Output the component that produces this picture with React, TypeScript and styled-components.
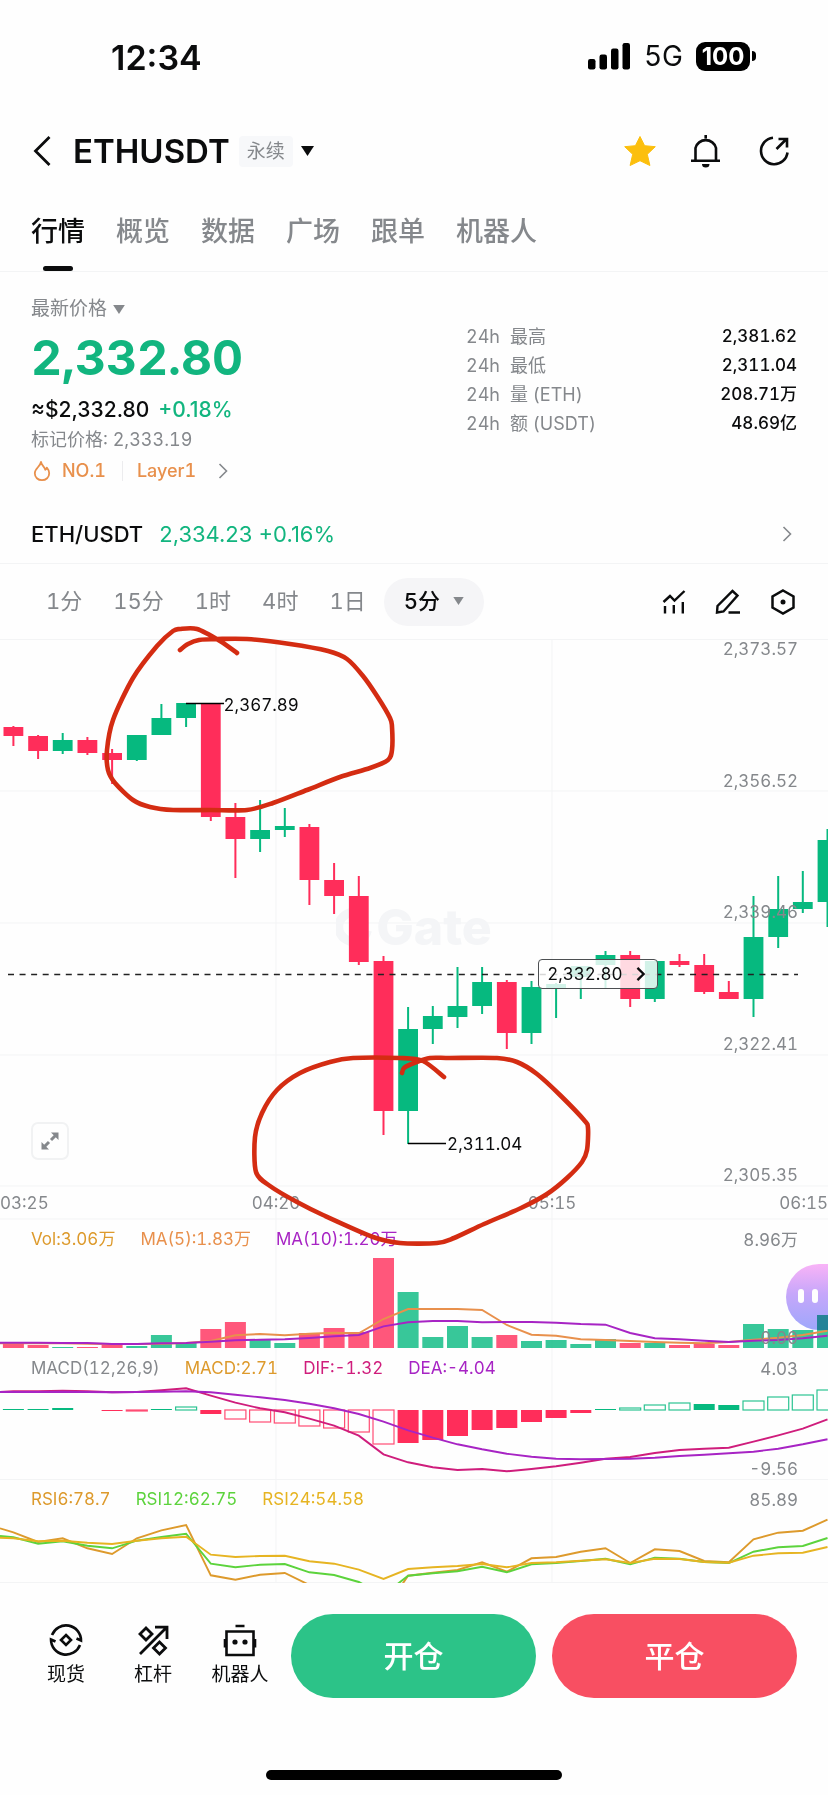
import React from "react";
import styled, { createGlobalStyle } from "styled-components";

const color = {
  ink: "#0b0c0d",
  muted: "#85888c",
  line: "#f3f4f5",
  up: "#06b97f",
  upText: "#12b57f",
  down: "#ff2d5a",
  gold: "#dd9a2c",
  orange: "#e8904c",
  purple: "#a724c4",
  magenta: "#cf1d7c",
  lime: "#5cd33c",
  yellow: "#e6b422",
  marker: "#d42c12",
};

const GlobalStyle = createGlobalStyle`
  *, *::before, *::after { box-sizing: border-box; }
  body {
    margin: 0;
    background: #fefefe;
    color: ${color.ink};
    font-family: Inter, "Noto Sans CJK SC", sans-serif;
    font-size: 18px;
    font-variant-numeric: tabular-nums;
    overflow-x: hidden;
  }
  button {
    font: inherit;
    font-variant-numeric: inherit;
    color: inherit;
    background: none;
    border: 0;
    padding: 0;
    cursor: pointer;
  }
  a { color: inherit; text-decoration: none; }
  svg { display: block; flex: none; }
`;

/* ---------- status bar ---------- */

const StatusBar = styled.div`
  display: flex;
  align-items: center;
  justify-content: space-between;
  height: 114px;
  padding: 0 72px 0 111px;
`;

const Clock = styled.time`
  font-size: 34px;
  font-weight: 600;
  font-variant-numeric: normal;
`;

const StatusIcons = styled.div`
  display: flex;
  align-items: center;
  gap: 13px;
  padding-bottom: 2px;
`;

const Network = styled.span`
  font-size: 28px;
  line-height: 30px;
`;

const Battery = styled.div`
  display: flex;
  align-items: center;
  gap: 2px;
`;

const BatteryBody = styled.span`
  width: 54px;
  height: 29px;
  border-radius: 9px;
  background: #000;
  color: #fff;
  font-size: 24px;
  font-weight: 700;
  font-variant-numeric: normal;
  line-height: 29px;
  text-align: center;
`;

const BatteryTip = styled.span`
  width: 4px;
  height: 10px;
  border-radius: 0 4px 4px 0;
  background: #000;
`;

/* ---------- header ---------- */

const Header = styled.header`
  display: flex;
  align-items: center;
  height: 74px;
  padding: 0 38px 0 30px;
`;

const IconButton = styled.button`
  display: grid;
  place-items: center;
`;

const Title = styled.h1`
  margin: 0 9px 0 19px;
  font-size: 33px;
  font-weight: 600;
`;

const PairButton = styled.button`
  display: flex;
  align-items: center;
  gap: 8px;
`;

const Badge = styled.span`
  padding: 0 8px;
  border-radius: 4px;
  background: #f7f8fa;
  color: ${color.muted};
  font-size: 19px;
  line-height: 31px;
`;

const HeaderActions = styled.div`
  display: flex;
  gap: 35px;
  margin-left: auto;
`;

/* ---------- tabs ---------- */

const Tabs = styled.nav`
  display: flex;
  gap: 31px;
  height: 84px;
  padding: 24px 31px 0;
  border-bottom: 1px solid ${color.line};
`;

const Tab = styled.a<{ $active?: boolean }>`
  display: flex;
  flex-direction: column;
  align-items: center;
  justify-content: space-between;
  font-size: 27px;
  font-weight: 500;
  line-height: 40px;
  color: ${(p) => (p.$active ? color.ink : color.muted)};
  &::after {
    content: "";
    width: 30px;
    height: 5px;
    border-radius: 3px;
    background: ${(p) => (p.$active ? color.ink : "transparent")};
  }
`;

/* ---------- price summary ---------- */

const Summary = styled.section`
  display: flex;
  justify-content: space-between;
  padding: 24px 31px 0;
`;

const PriceColumn = styled.div`
  display: flex;
  flex-direction: column;
  align-items: flex-start;
`;

const PriceKind = styled.button`
  display: flex;
  align-items: center;
  gap: 6px;
  color: ${color.muted};
  font-size: 19px;
  line-height: 26px;
`;

const LastPrice = styled.strong`
  margin-top: 6px;
  color: ${color.upText};
  font-size: 48px;
  font-weight: 700;
  line-height: 60px;
`;

const FiatPrice = styled.div`
  display: flex;
  gap: 9px;
  margin-top: 8px;
  font-size: 21px;
  font-weight: 500;
  font-variant-numeric: normal;
  line-height: 28px;
`;

const Change = styled.span`
  color: ${color.upText};
`;

const MarkPrice = styled.div`
  margin-top: 3px;
  color: ${color.muted};
  font-size: 18px;
  line-height: 26px;
`;

const Tags = styled.a`
  display: flex;
  align-items: center;
  margin-top: 5px;
  color: ${color.orange};
  font-size: 18px;
  font-weight: 500;
  line-height: 26px;
`;

const RankTag = styled.span`
  margin-left: 9px;
  padding-right: 16px;
  border-right: 1px solid #ececee;
  line-height: 20px;
`;

const SectorTag = styled.span`
  margin: 0 22px 0 14px;
`;

const Stats = styled.dl`
  flex: 0 1 331px;
  margin: 26px 0 0;
`;

const StatRow = styled.div`
  display: flex;
  line-height: 29px;
`;

const StatPeriod = styled.span`
  display: inline-block;
  width: 44px;
`;

const StatName = styled.dt`
  color: ${color.muted};
`;

const StatValue = styled.dd`
  margin: 0 0 0 auto;
  font-size: 17px;
  font-weight: 500;
`;

const SpotLink = styled.a`
  display: flex;
  align-items: center;
  gap: 16px;
  margin-top: 20px;
  height: 60px;
  padding: 0 36px 0 31px;
  border-bottom: 1px solid ${color.line};
  font-size: 22px;
  font-weight: 500;
  font-variant-numeric: normal;
`;

const SpotQuote = styled.span`
  margin-right: auto;
  color: ${color.upText};
  font-weight: 400;
`;

/* ---------- period toolbar ---------- */

const Toolbar = styled.div`
  display: flex;
  align-items: center;
  justify-content: space-between;
  height: 75px;
  padding: 0 32px 0 46px;
`;

const Periods = styled.div`
  display: flex;
  align-items: center;
  gap: 31px;
  color: ${color.muted};
  font-size: 22px;
  line-height: 44px;
  & > button { padding-bottom: 2px; }
`;

const PeriodMenu = styled.button`
  display: flex;
  align-items: center;
  gap: 13px;
  height: 48px;
  margin-left: -13px;
  padding: 0 20px;
  border-radius: 24px;
  background: #f5f5f7;
  color: ${color.ink};
  font-weight: 500;
`;

const Tools = styled.div`
  display: flex;
  gap: 29px;
`;

/* ---------- charts ---------- */

const ChartSection = styled.section`
  position: relative;
  font-size: 17px;
`;

const Panel = styled.div<{ $height: number }>`
  position: relative;
  height: ${(p) => p.$height}px;
`;

const Plot = styled.svg`
  position: absolute;
  inset: 0;
  width: 100%;
  height: 100%;
`;

const Sketch = styled(Plot)`
  overflow: visible;
  pointer-events: none;
`;

const Watermark = styled.div`
  position: absolute;
  top: 262px;
  left: 0;
  right: 0;
  display: flex;
  align-items: center;
  justify-content: center;
  gap: 4px;
  color: #f4f5f7;
  font-size: 50px;
  font-weight: 800;
  line-height: 52px;
`;

const Scale = styled.div`
  position: absolute;
  top: 0;
  right: 30px;
  bottom: 2px;
  display: flex;
  flex-direction: column;
  justify-content: space-between;
  align-items: flex-end;
  color: ${color.muted};
  line-height: 20px;
`;

const PanelScale = styled(Scale)`
  top: 11px;
  bottom: 0;
`;

const Callout = styled.span<{ $left: number; $top: number }>`
  position: absolute;
  left: ${(p) => p.$left}%;
  top: ${(p) => p.$top}px;
  line-height: 20px;
`;

const PriceTag = styled.button`
  position: absolute;
  top: 320px;
  left: 65%;
  display: flex;
  align-items: center;
  justify-content: space-between;
  width: 120px;
  height: 30px;
  padding: 0 12px 0 8px;
  border: 1px solid #4c4f52;
  border-radius: 4px;
  background: rgba(255, 255, 255, 0.82);
`;

const ExpandButton = styled.button`
  position: absolute;
  left: 31px;
  bottom: 27px;
  display: grid;
  place-items: center;
  width: 38px;
  height: 38px;
  border: 2px solid #f1f2f3;
  border-radius: 7px;
  background: #fefefe;
`;

const TimeAxis = styled.div`
  position: relative;
  display: grid;
  grid-template-columns: 1fr 2fr 2fr 1fr;
  height: 32px;
  color: ${color.muted};
  line-height: 32px;
  text-align: center;
  & > :first-child { text-align: left; }
  & > :last-child { text-align: right; }
`;

const Legend = styled.div`
  position: relative;
  display: flex;
  gap: 25px;
  padding: 8px 31px 0;
  line-height: 24px;
`;

const LegendItem = styled.span<{ $color: string }>`
  color: ${(p) => p.$color};
`;

const Assistant = styled.button`
  position: absolute;
  right: 0;
  top: 45px;
  display: flex;
  align-items: center;
  gap: 8px;
  width: 42px;
  height: 66px;
  padding: 0 0 2px 12px;
  border-radius: 33px 0 0 33px;
  background: linear-gradient(180deg, #fab4f8 0%, #c7a8fb 45%, #9fa8fc 100%);
  mix-blend-mode: multiply;
`;

const Eye = styled.span`
  width: 6px;
  height: 14px;
  border-radius: 3px;
  background: #fff;
`;

/* ---------- bottom bar ---------- */

const BottomBar = styled.footer`
  display: flex;
  align-items: center;
  gap: 16px;
  padding: 31px 31px 0;
`;

const Shortcuts = styled.div`
  flex: none;
  display: grid;
  grid-template-columns: 70px 104px 70px;
  justify-items: center;
`;

const Shortcut = styled.a`
  display: flex;
  flex-direction: column;
  align-items: center;
  gap: 4px;
  font-size: 19px;
  line-height: 28px;
  white-space: nowrap;
`;

const TradeButton = styled.button<{ $tone: string }>`
  flex: 1;
  height: 84px;
  padding-bottom: 4px;
  border-radius: 42px;
  background: ${(p) => p.$tone};
  color: #fff;
  font-size: 30px;
  font-weight: 500;
`;

const HomeIndicator = styled.div`
  width: 296px;
  height: 10px;
  margin: 72px auto 14px;
  border-radius: 5px;
  background: #000;
`;

/* ---------- chart data ---------- */

const WIDTH = 828;
const STEP = 24.67;
const FIRST = 13.4;
const xOf = (i: number) => Math.round((FIRST + i * STEP) * 10) / 10;

/* high, body top, body bottom, low, rising */
type Candle = [number, number, number, number, 0 | 1];
const candles: Candle[] = [
  [87, 88, 97, 107, 0], [96, 97, 112, 120, 0], [94, 101, 112, 115, 1], [98, 101, 114, 116, 0],
  [110, 114, 121, 145, 0], [96, 96, 121, 122, 1], [65, 79, 96, 96, 1], [64, 64, 79, 88, 1],
  [64, 65, 178, 182, 0], [164, 178, 200, 239, 0], [161, 191, 200, 213, 1], [169, 187, 191, 198, 1],
  [185, 188, 241, 266, 0], [224, 241, 257, 275, 0], [237, 257, 323, 326, 0], [317, 322, 472, 496, 0],
  [368, 390, 472, 505, 1], [367, 377, 390, 405, 1], [328, 367, 378, 389, 1], [328, 343, 367, 375, 1],
  [341, 343, 394, 410, 0], [342, 348, 394, 405, 1], [344, 345, 349, 379, 1], [327, 327, 338, 360, 1],
  [312, 316, 326, 350, 1], [312, 316, 360, 368, 0], [322, 322, 360, 363, 1], [315, 322, 326, 328, 0],
  [315, 326, 353, 355, 0], [342, 353, 360, 360, 0], [257, 298, 360, 378, 1], [237, 270, 298, 309, 1],
  [232, 263, 270, 274, 1], [190, 201, 263, 288, 1],
];

const volumes = [
  4, 3, 1, 1, 3, 2, 13, 5, 19, 26, 8, 5, 15, 20, 16, 90, 56, 11, 22, 11, 13, 7, 8, 4, 9, 5, 5, 3, 4, 3, 24, 19, 18, 33,
];

const ma5 = [
  385, 385, 385, 386, 387, 387, 386, 384, 378, 361, 357, 361, 356, 353, 355, 312, 282, 282, 282, 285, 330, 359, 362,
  373, 375, 378, 381, 383, 385, 381, 374, 368, 360, 347,
];
const ma10 = [
  383, 383, 384, 384, 387, 387, 385, 384, 380, 376, 374, 373, 369, 364, 360, 334, 322, 318, 318, 322, 321, 321, 323,
  327, 329, 354, 370, 373, 377, 381, 377, 375, 370, 362,
];

/* offset from the zero line, solid or outlined */
type Bar = [number, 0 | 1];
const macd: Bar[] = [
  [1, 1], [1, 1], [2, 1], [0, 1], [-1, 1], [-1, 0], [1, 1], [3, 0], [-4, 1], [-9, 0], [-12, 0], [-13, 0], [-16, 0],
  [-18, 0], [-22, 0], [-34, 0], [-33, 1], [-30, 1], [-26, 1], [-20, 1], [-18, 1], [-12, 1], [-8, 1], [-3, 1], [1, 1],
  [2, 0], [5, 0], [7, 0], [6, 1], [5, 1], [9, 0], [13, 0], [15, 0], [20, 0],
];
const dif = [
  529, 529, 527, 529, 532, 531, 526, 520, 542, 563, 580, 592, 611, 632, 662, 718, 742, 757, 765, 762, 769, 762, 754,
  743, 731, 726, 714, 705, 701, 698, 680, 661, 641, 613,
];
const dea = [
  531, 531, 530, 531, 532, 531, 530, 529, 532, 539, 547, 555, 566, 580, 597, 620, 646, 668, 688, 703, 716, 725, 731,
  733, 732, 731, 728, 723, 719, 715, 710, 701, 688, 673,
];

const rsi6 = [
  952, 981, 970, 1000, 1017, 970, 946, 930, 1081, 1094, 1079, 1074, 1110, 1140, 1160, 1190, 1082, 1073, 1065, 1042,
  1070, 1030, 1026, 1010, 1000, 1044, 1003, 1008, 1038, 1042, 973, 953, 947, 914,
];
const rsi12 = [
  967, 986, 979, 992, 1000, 977, 966, 956, 1046, 1057, 1049, 1047, 1072, 1080, 1101, 1140, 1082, 1075, 1069, 1055,
  1072, 1048, 1044, 1038, 1031, 1048, 1028, 1031, 1041, 1044, 1010, 997, 993, 969,
];
const rsi24 = [
  970, 979, 977, 983, 987, 977, 970, 965, 1019, 1026, 1023, 1022, 1039, 1046, 1064, 1092, 1062, 1057, 1053, 1047,
  1057, 1044, 1042, 1037, 1033, 1044, 1031, 1032, 1041, 1043, 1022, 1015, 1013, 996,
];

const linear = (origin: number) => (v: number) => Math.round(((v - origin) / 3) * 10) / 10;
const volumeY = linear(12);
const macdY = linear(399);
const rsiY = linear(792);

function linePoints(values: number[], y: (v: number) => number, lead = values[0]) {
  return [`0,${y(lead)}`, ...values.map((v, i) => `${xOf(i)},${y(v)}`)].join(" ");
}

/* hand-drawn loops around the high and the low */
type Point = [number, number];
const highLoop: Point[] = [
  [180, 11], [188, 5], [199, 1], [217, 0], [247, 0], [290, 5], [328, 12], [347, 20], [363, 37], [377, 57], [390, 79],
  [392, 88], [392, 111], [388, 121], [370, 129], [340, 138], [307, 151], [273, 164], [247, 171], [210, 171],
  [173, 171], [150, 168], [133, 161], [115, 144], [108, 131], [107, 111], [113, 81], [133, 39], [157, 7], [173, -8],
  [180, -10], [197, -10], [220, 2], [237, 14],
];
const lowLoop: Point[] = [
  [402, 434], [404, 429], [414, 424], [430, 419], [450, 419], [497, 419], [517, 423], [537, 435], [561, 457],
  [584, 481], [588, 489], [587, 511], [582, 523], [567, 539], [547, 555], [521, 569], [484, 585], [454, 599],
  [437, 604], [400, 604], [373, 598], [323, 576], [297, 563], [270, 547], [256, 533], [255, 498], [262, 474],
  [277, 451], [300, 434], [330, 423], [353, 419], [400, 419], [423, 422], [444, 438],
];

function smoothPath(points: Point[]) {
  let d = `M${points[0][0]} ${points[0][1]}`;
  for (let i = 0; i < points.length - 1; i++) {
    const p0 = points[Math.max(0, i - 1)];
    const p1 = points[i];
    const p2 = points[i + 1];
    const p3 = points[Math.min(points.length - 1, i + 2)];
    const c1 = [p1[0] + (p2[0] - p0[0]) / 7, p1[1] + (p2[1] - p0[1]) / 7];
    const c2 = [p2[0] - (p3[0] - p1[0]) / 7, p2[1] - (p3[1] - p1[1]) / 7];
    d += ` C${c1[0].toFixed(1)} ${c1[1].toFixed(1)} ${c2[0].toFixed(1)} ${c2[1].toFixed(1)} ${p2[0]} ${p2[1]}`;
  }
  return d;
}

/* ---------- icons ---------- */

const Caret = ({ size, fill }: { size: number; fill: string }) => (
  <svg width={size} height={size - 3} viewBox="0 0 13 10" fill={fill} aria-hidden="true">
    <path d="M0 0h13L6.500 10z" />
  </svg>
);

const Chevron = ({ height = 16, stroke = color.muted, weight = 1.6 }) => (
  <svg width={height / 2 + 2} height={height} viewBox="0 0 10 16" fill="none" stroke={stroke} strokeWidth={weight} aria-hidden="true">
    <path d="M1.500 1l7 7-7 7" />
  </svg>
);

const BackIcon = () => (
  <svg width="24" height="32" viewBox="0 0 24 32" fill="none" stroke={color.ink} strokeWidth="2.800" aria-hidden="true">
    <path d="M19.500 2L5.500 16l14 14" />
  </svg>
);

const SignalIcon = () => (
  <svg width="43" height="27" viewBox="0 0 43 27" fill="#000" aria-hidden="true">
    <rect x="0" y="16" width="7.500" height="10.500" rx="2.200" />
    <rect x="11.500" y="11.500" width="7.500" height="15" rx="2.200" />
    <rect x="23" y="5.500" width="7.500" height="21" rx="2.200" />
    <rect x="34.500" y="0" width="7.500" height="26.500" rx="2.200" />
  </svg>
);

const StarIcon = () => (
  <svg width="32" height="32" viewBox="0 0 32 32" fill="#fcbf0d" stroke="#fcbf0d" strokeLinejoin="round" aria-hidden="true">
    <path d="M16 1.500l4.600 9.200 10.700 1-8 7.600 2.600 11.200L16 25.700 6.100 30.500 8.700 19.300.7 11.700l10.700-1z" />
  </svg>
);

const BellIcon = () => (
  <svg width="32" height="34" viewBox="0 0 32 34" fill="none" stroke={color.ink} strokeWidth="2.600" aria-hidden="true">
    <path d="M0 26.800h29M4.500 26.800V14a10.500 10 0 0 1 20.500 0v12.800M14.700 1v3.500" />
    <path d="M11 30h7.500a3.700 3.500 0 0 1-7.500 0z" fill={color.ink} stroke="none" />
  </svg>
);

const ShareIcon = () => (
  <svg width="32" height="32" viewBox="0 0 32 32" fill="none" stroke={color.ink} strokeWidth="2.600" aria-hidden="true">
    <path d="M15 2.700A13.300 13.300 0 1 0 29.500 17.500M18.500 14L28.500 4M20.500 4h8.500v8.500" />
  </svg>
);

const FlameIcon = () => (
  <svg width="22" height="22" viewBox="0 0 22 22" fill="none" stroke={color.orange} strokeWidth="1.800" strokeLinejoin="round" aria-hidden="true">
    <path d="M10 2c.6 3.500 3.500 4.500 4.300 7.800.9-.4 1.400-1.300 1.500-2.200 1.500 1.700 2.400 3.600 2.400 5.600 0 4.200-3.100 7-7.200 7s-7.200-2.800-7.200-7C3.800 8.500 9.300 6.500 10 2z" />
  </svg>
);

const IndicatorIcon = () => (
  <svg width="24" height="26" viewBox="0 0 24 26" fill="none" stroke={color.ink} strokeWidth="2.400" aria-hidden="true">
    <path d="M1.500 13l6.500-6 4.500 4.500L22.500 2M3 17v7.500M11.800 16v8.500M20.800 13v11.500" />
  </svg>
);

const PencilIcon = () => (
  <svg width="26" height="26" viewBox="0 0 26 26" fill="none" stroke={color.ink} strokeWidth="2.400" aria-hidden="true">
    <path d="M17.500 2l5 4.500L8.500 22.500 2 23.500l.5-6.500zM13.500 23.500H25" />
  </svg>
);

const HexagonIcon = () => (
  <svg width="26" height="26" viewBox="0 0 26 26" fill="none" stroke={color.ink} strokeWidth="2.500" aria-hidden="true">
    <path d="M13 1.500l10.500 6v11L13 24.500l-10.500-6v-11z" />
    <circle cx="13" cy="13" r="2.500" fill={color.ink} stroke="none" />
  </svg>
);

const ExpandIcon = () => (
  <svg width="20" height="20" viewBox="0 0 20 20" fill={color.muted} stroke={color.muted} strokeWidth="3" aria-hidden="true">
    <path d="M11 9l5-5M9 11l-5 5" />
    <path d="M11 1.500h7.500V9zM1.500 11v7.500H9z" stroke="none" />
  </svg>
);

const SpotIcon = () => (
  <svg width="34" height="34" viewBox="0 0 34 34" fill="none" stroke={color.ink} strokeWidth="2.600" aria-hidden="true">
    <path d="M3 12A15 15 0 0 1 32 17.500l-4.500-2M31 22A15 15 0 0 1 2 16.500l4.500 2" />
    <path d="M17 12l5 5-5 5-5-5z" />
  </svg>
);

const LeverageIcon = () => (
  <svg width="34" height="34" viewBox="0 0 34 34" fill="none" stroke={color.ink} strokeWidth="2.800" aria-hidden="true">
    <path d="M4 31L30 5M19 4.200h12V16" />
    <path d="M10 5l6 6-6 6-6-6zM23.500 19l6 6-6 6-6-6z" />
  </svg>
);

const RobotIcon = () => (
  <svg width="34" height="34" viewBox="0 0 34 34" fill="none" stroke={color.ink} strokeWidth="2.600" aria-hidden="true">
    <path d="M12.500 3h9M3.500 8.500h27V32h-27zM2 16v8.500M32 16v8.500" />
    <circle cx="12" cy="19" r="2.600" fill={color.ink} stroke="none" />
    <circle cx="22" cy="19" r="2.600" fill={color.ink} stroke="none" />
  </svg>
);

/* ---------- chart panels ---------- */

const Grid = () => (
  <Plot viewBox={`0 0 ${WIDTH} 944`} preserveAspectRatio="none" stroke={color.line} strokeWidth="1" aria-hidden="true">
    <path d="M0 .5H828M0 152H828M0 284H828M0 416H828M0 547H828M0 580H828M0 840.500H828M0 943.500H828" />
    <path d="M276 0V944M552 0V944" />
  </Plot>
);

const PricePlot = () => (
  <Plot viewBox={`0 0 ${WIDTH} 548`} preserveAspectRatio="none" role="img" aria-label="ETHUSDT K线">
    {candles.map(([high, top, bottom, low, up], i) => (
      <g key={i} fill={up ? color.up : color.down}>
        <rect x={xOf(i) - 1} y={high} width="2" height={low - high} />
        <rect x={xOf(i) - 9.9} y={top} width="19.800" height={bottom - top} />
      </g>
    ))}
    <path d="M186 64.500H224M408 504.500H446" stroke="#000" strokeWidth="1.600" />
    <path d="M8 335.500H798" stroke="#222" strokeWidth="1.300" strokeDasharray="6 5.560" />
  </Plot>
);

const VolumePlot = () => (
  <Plot viewBox={`0 0 ${WIDTH} 129`} preserveAspectRatio="none" fill="none" strokeWidth="1.900" aria-hidden="true">
    {volumes.map((v, i) => (
      <rect
        key={i}
        x={xOf(i) - 10.5}
        y={129 - v}
        width="21"
        height={v}
        fill={candles[i][4] ? color.up : color.down}
        opacity="0.8"
      />
    ))}
    <polyline points={linePoints(ma5, volumeY)} stroke={color.orange} />
    <polyline points={linePoints(ma10, volumeY)} stroke={color.purple} />
  </Plot>
);

const MACD_ZERO = 62;

const MacdPlot = () => (
  <Plot viewBox={`0 0 ${WIDTH} 131`} preserveAspectRatio="none" fill="none" strokeWidth="1.900" aria-hidden="true">
    {macd.map(([v, solid], i) => {
      const tone = v > 0 ? color.up : color.down;
      const y = v > 0 ? MACD_ZERO - v : MACD_ZERO;
      return solid ? (
        <rect key={i} x={xOf(i) - 10.5} y={y} width="21" height={Math.abs(v)} fill={tone} />
      ) : (
        <rect key={i} x={xOf(i) - 10.5} y={y} width="21" height={Math.abs(v)} stroke={tone} strokeWidth="1.200" opacity="0.85" />
      );
    })}
    <polyline points={linePoints(dif, macdY, 531)} stroke={color.magenta} />
    <polyline points={linePoints(dea, macdY)} stroke={color.purple} />
  </Plot>
);

const RsiPlot = () => (
  <Plot viewBox={`0 0 ${WIDTH} 104`} preserveAspectRatio="none" fill="none" strokeWidth="1.900" aria-hidden="true">
    <polyline points={linePoints(rsi6, rsiY, 940)} stroke={color.gold} />
    <polyline points={linePoints(rsi12, rsiY, 963)} stroke={color.lime} />
    <polyline points={linePoints(rsi24, rsiY, 968)} stroke={color.yellow} />
  </Plot>
);

/* ---------- page ---------- */

const tabs = ["行情", "概览", "数据", "广场", "跟单", "机器人"];
const periods = ["1分", "15分", "1时", "4时", "1日"];
const priceTicks = ["2,373.57", "2,356.52", "2,339.46", "2,322.41", "2,305.35"];
const timeTicks = ["03:25", "04:20", "05:15", "06:15"];
const stats = [
  ["最高", "2,381.62"],
  ["最低", "2,311.04"],
  ["量 (ETH)", "208.71万"],
  ["额 (USDT)", "48.69亿"],
];

export default function App() {
  return (
    <>
      <GlobalStyle />
      <StatusBar>
        <Clock>12:34</Clock>
        <StatusIcons>
          <SignalIcon />
          <Network>5G</Network>
          <Battery>
            <BatteryBody>100</BatteryBody>
            <BatteryTip />
          </Battery>
        </StatusIcons>
      </StatusBar>

      <Header>
        <IconButton aria-label="返回"><BackIcon /></IconButton>
        <Title>ETHUSDT</Title>
        <PairButton>
          <Badge>永续</Badge>
          <Caret size={13} fill={color.ink} />
        </PairButton>
        <HeaderActions>
          <IconButton aria-label="收藏"><StarIcon /></IconButton>
          <IconButton aria-label="提醒"><BellIcon /></IconButton>
          <IconButton aria-label="分享"><ShareIcon /></IconButton>
        </HeaderActions>
      </Header>

      <Tabs>
        {tabs.map((name, i) => (
          <Tab key={name} href="#" $active={i === 0}>{name}</Tab>
        ))}
      </Tabs>

      <Summary>
        <PriceColumn>
          <PriceKind>
            最新价格 <Caret size={12} fill={color.muted} />
          </PriceKind>
          <LastPrice>2,332.80</LastPrice>
          <FiatPrice>
            <span>≈$2,332.80</span>
            <Change>+0.18%</Change>
          </FiatPrice>
          <MarkPrice>标记价格: 2,333.19</MarkPrice>
          <Tags href="#">
            <FlameIcon />
            <RankTag>NO.1</RankTag>
            <SectorTag>Layer1</SectorTag>
            <Chevron />
          </Tags>
        </PriceColumn>
        <Stats>
          {stats.map(([name, value]) => (
            <StatRow key={name}>
              <StatName><StatPeriod>24h</StatPeriod>{name}</StatName>
              <StatValue>{value}</StatValue>
            </StatRow>
          ))}
        </Stats>
      </Summary>

      <SpotLink href="#">
        <span>ETH/USDT</span>
        <SpotQuote>2,334.23 +0.16%</SpotQuote>
        <Chevron />
      </SpotLink>

      <Toolbar>
        <Periods>
          {periods.map((p) => (
            <button key={p}>{p}</button>
          ))}
          <PeriodMenu>
            5分 <Caret size={11} fill={color.muted} />
          </PeriodMenu>
        </Periods>
        <Tools>
          <IconButton aria-label="指标"><IndicatorIcon /></IconButton>
          <IconButton aria-label="画线"><PencilIcon /></IconButton>
          <IconButton aria-label="设置"><HexagonIcon /></IconButton>
        </Tools>
      </Toolbar>

      <ChartSection>
        <Grid />
        <Panel $height={548}>
          <Watermark aria-hidden="true">
            <svg width="36" height="38" viewBox="0 0 32 34" fill="none" stroke="currentColor" strokeWidth="8">
              <path d="M19 4.500A13 13 0 1 0 28 20" />
              <path d="M20 8h8v8h-8z" fill="currentColor" stroke="none" />
            </svg>
            Gate
          </Watermark>
          <PricePlot />
          <Scale>
            {priceTicks.map((t) => (
              <span key={t}>{t}</span>
            ))}
          </Scale>
          <Callout $left={27} $top={56}>2,367.89</Callout>
          <Callout $left={54} $top={495}>2,311.04</Callout>
          <PriceTag>
            2,332.80 <Chevron height={14} stroke={color.ink} weight={2.6} />
          </PriceTag>
          <ExpandButton aria-label="全屏"><ExpandIcon /></ExpandButton>
        </Panel>
        <TimeAxis>
          {timeTicks.map((t) => (
            <span key={t}>{t}</span>
          ))}
        </TimeAxis>
        <Panel $height={129}>
          <VolumePlot />
          <Legend>
            <LegendItem $color={color.gold}>Vol:3.06万</LegendItem>
            <LegendItem $color={color.orange}>MA(5):1.83万</LegendItem>
            <LegendItem $color={color.purple}>MA(10):1.20万</LegendItem>
          </Legend>
          <PanelScale>
            <span>8.96万</span>
            <span>0.00</span>
          </PanelScale>
          <Assistant aria-label="智能助手">
            <Eye />
            <Eye />
          </Assistant>
        </Panel>
        <Panel $height={131}>
          <MacdPlot />
          <Legend>
            <LegendItem $color={color.muted}>MACD(12,26,9)</LegendItem>
            <LegendItem $color={color.gold}>MACD:2.71</LegendItem>
            <LegendItem $color={color.magenta}>DIF:-1.32</LegendItem>
            <LegendItem $color={color.purple}>DEA:-4.04</LegendItem>
          </Legend>
          <PanelScale>
            <span>4.03</span>
            <span>-9.56</span>
          </PanelScale>
        </Panel>
        <Panel $height={104}>
          <RsiPlot />
          <Legend>
            <LegendItem $color={color.gold}>RSI6:78.7</LegendItem>
            <LegendItem $color={color.lime}>RSI12:62.75</LegendItem>
            <LegendItem $color={color.yellow}>RSI24:54.58</LegendItem>
          </Legend>
          <PanelScale>
            <span>85.89</span>
          </PanelScale>
        </Panel>
        <Sketch
          viewBox={`0 0 ${WIDTH} 944`}
          preserveAspectRatio="none"
          fill="none"
          stroke={color.marker}
          strokeWidth="4.600"
          strokeLinecap="round"
          strokeLinejoin="round"
          aria-hidden="true"
        >
          <path d={smoothPath(highLoop)} />
          <path d={smoothPath(lowLoop)} />
        </Sketch>
      </ChartSection>

      <BottomBar>
        <Shortcuts>
          <Shortcut href="#"><SpotIcon />现货</Shortcut>
          <Shortcut href="#"><LeverageIcon />杠杆</Shortcut>
          <Shortcut href="#"><RobotIcon />机器人</Shortcut>
        </Shortcuts>
        <TradeButton $tone="#2cc388">开仓</TradeButton>
        <TradeButton $tone="#f84f62">平仓</TradeButton>
      </BottomBar>
      <HomeIndicator />
    </>
  );
}
